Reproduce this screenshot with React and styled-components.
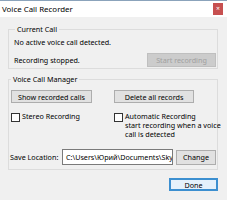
import React from "react";
import styled, { createGlobalStyle } from "styled-components";

const Global = createGlobalStyle`
  html, body { margin: 0; padding: 0; background: #f0f0f0; }
  body { font-family: "Noto Sans", "Open Sans", sans-serif; }
`;

const Window = styled.div`
  width: 227px;
  height: 200px;
  box-sizing: border-box;
  border-top: 1px solid #8ba3bb;
  background: #f0f0f0;
  display: flex;
  flex-direction: column;
  overflow: hidden;
`;

const TitleBar = styled.div`
  height: 16px;
  background: #ffffff;
  display: flex;
  align-items: center;
  justify-content: space-between;
  padding: 0 4px 0 2px;
`;

const Title = styled.span`
  font-size: 7.9px;
  line-height: 12px;
  color: #000;
`;

const Close = styled.div`
  width: 10px;
  height: 12px;
  background: #c75050;
  color: #fff;
  font-size: 7px;
  line-height: 12px;
  text-align: center;
`;

const Body = styled.div`
  padding: 7px 9px 0 8px;
  display: flex;
  flex-direction: column;
`;

const Group = styled.fieldset`
  margin: ${(p) => p.$mt || 0}px 0 0 0;
  padding: ${(p) => p.$pad};
  border: 1px solid #dcdcdc;
  min-width: 0;
  font-size: 7.2px;
  line-height: 10px;
  color: #000;
`;

const Legend = styled.legend`
  padding: 0 2px;
  margin-left: 1px;
  font-size: 7.2px;
  line-height: 10px;
`;

const Text = styled.div`
  font-size: 7.2px;
  line-height: 10px;
  white-space: nowrap;
`;

const Row = styled.div`
  display: flex;
  align-items: center;
  justify-content: space-between;
  margin-top: ${(p) => p.$mt || 0}px;
`;

const Button = styled.div`
  box-sizing: border-box;
  width: ${(p) => p.$w}px;
  height: ${(p) => p.$h || 13}px;
  background: ${(p) => (p.$primary ? "#e5f1fb" : p.$disabled ? "#cccccc" : "#e1e1e1")};
  border: ${(p) => (p.$primary ? "2px solid #3c8fd0" : p.$disabled ? "1px solid #bfbfbf" : "1px solid #adadad")};
  color: ${(p) => (p.$disabled ? "#a0a0a0" : "#000")};
  font-size: 7.2px;
  display: flex;
  align-items: center;
  justify-content: center;
  white-space: nowrap;
`;

const Grid = styled.div`
  display: grid;
  grid-template-columns: 103px 1fr;
  padding-left: 1px;
`;

const Check = styled.div`
  display: flex;
  align-items: flex-start;
  gap: 2px;
  margin-top: 9px;
  font-size: 7.2px;
  line-height: 9px;
  white-space: nowrap;
`;

const Box = styled.div`
  width: 9px;
  height: 9px;
  box-sizing: border-box;
  border: 1px solid #333;
  background: #fff;
  flex: none;
  margin-top: 0.5px;
`;

const SaveRow = styled.div`
  display: flex;
  align-items: center;
  margin-top: 10px;
`;

const Label = styled.span`
  font-size: 7.2px;
  width: 52px;
  white-space: nowrap;
`;

const Input = styled.div`
  box-sizing: border-box;
  width: 111px;
  height: 16px;
  border: 1px solid #7a7a7a;
  background: #fff;
  font-size: 7.2px;
  line-height: 14px;
  padding-left: 3px;
  overflow: hidden;
  white-space: nowrap;
  margin-right: 3px;
`;

const Footer = styled.div`
  display: flex;
  justify-content: flex-end;
  margin-top: 8px;
`;

export default function App() {
  return (
    <>
      <Global />
      <Window>
        <TitleBar>
          <Title>Voice Call Recorder</Title>
          <Close>×</Close>
        </TitleBar>
        <Body>
          <Group $pad="3px 1px 1px 5px">
            <Legend>Current Call</Legend>
            <Text>No active voice call detected.</Text>
            <Row $mt={6}>
              <Text>Recording stopped.</Text>
              <Button $w={69} $h={14} $disabled>Start recording</Button>
            </Row>
          </Group>
          <Group $mt={5} $pad="6px 1px 4px 1px">
            <Legend>Voice Call Manager</Legend>
            <Grid>
              <Button $w={81}>Show recorded calls</Button>
              <Button $w={80}>Delete all records</Button>
              <Check>
                <Box />
                <span>Stereo Recording</span>
              </Check>
              <Check>
                <Box />
                <span>
                  Automatic Recording
                  <br />
                  start recording when a voice
                  <br />
                  call is detected
                </span>
              </Check>
            </Grid>
            <SaveRow>
              <Label>Save Location:</Label>
              <Input>C:\Users\Юрий\Documents\Skype</Input>
              <Button $w={40} $h={15}>Change</Button>
            </SaveRow>
          </Group>
          <Footer>
            <Button $w={49} $h={13} $primary>Done</Button>
          </Footer>
        </Body>
      </Window>
    </>
  );
}
